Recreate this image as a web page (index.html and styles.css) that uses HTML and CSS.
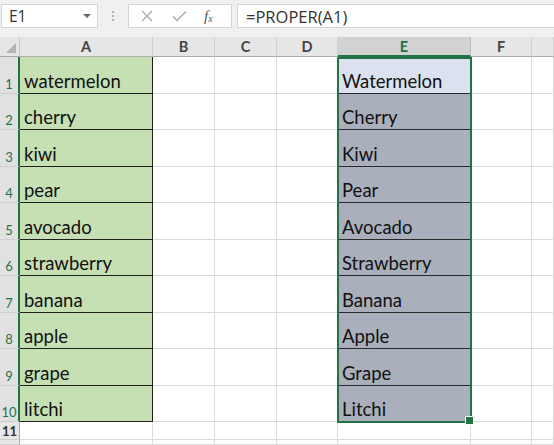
FILE: index.html
```html
<!DOCTYPE html>
<html lang="en">
<head>
    <meta charset="UTF-8">
    <meta name="viewport" content="width=device-width, initial-scale=1.0">
    <title>PROPER</title>
    <link rel="stylesheet" href="styles.css">
</head>
<body>
    <!-- Formula bar -->
    <div class="formula-bar">
        <div class="name-box">
            <span>E1</span>
            <span class="caret"></span>
        </div>
        <div class="grip"><i></i><i></i><i></i></div>
        <div class="fx-box">
            <svg class="fx-icon" width="12" height="12" viewBox="0 0 12 12">
                <path d="M1 1 L11 11 M11 1 L1 11" stroke="#a6a6a6" stroke-width="1.3" fill="none"/>
            </svg>
            <svg class="fx-icon" width="15" height="12" viewBox="0 0 15 12">
                <path d="M1 6.5 L5 10.5 L14 1.5" stroke="#a6a6a6" stroke-width="1.3" fill="none"/>
            </svg>
            <span class="fx-label">f<sub>x</sub></span>
        </div>
        <div class="formula-input">=PROPER(A1)</div>
    </div>

    <!-- Sheet -->
    <div class="sheet" id="sheet"></div>

    <script>
        const fruits = ["watermelon", "cherry", "kiwi", "pear", "avocado",
                        "strawberry", "banana", "apple", "grape", "litchi"];
        const columns = ["A", "B", "C", "D", "E", "F", ""];
        const sheet = document.getElementById('sheet');

        function cell(cls, text) {
            const el = document.createElement('div');
            el.className = cls;
            if (text) el.textContent = text;
            sheet.appendChild(el);
            return el;
        }

        // header row
        cell('corner').innerHTML = '<span class="corner-tri"></span>';
        columns.forEach(col => {
            cell('col-head' + (col === 'E' ? ' active' : ''), col);
        });

        // rows 1-10
        fruits.forEach((fruit, i) => {
            cell('row-head selected', String(i + 1));
            cell('cell green', fruit);
            cell('cell');
            cell('cell');
            cell('cell');
            const proper = fruit.charAt(0).toUpperCase() + fruit.slice(1);
            cell('cell slate' + (i === 0 ? ' first' : ''), proper);
            cell('cell');
            cell('cell');
        });

        // row 11 and the partial row under it
        cell('row-head plain', '11');
        for (let c = 0; c < 7; c++) cell('cell');
        cell('row-head plain');
        for (let c = 0; c < 7; c++) cell('cell');

        // selection frame E1:E10
        const frame = document.createElement('div');
        frame.className = 'selection';
        sheet.appendChild(frame);
    </script>
</body>
</html>
```

FILE: styles.css
```css
* {
    margin: 0;
    padding: 0;
    box-sizing: border-box;
}

body {
    width: 554px;
    height: 445px;
    overflow: hidden;
    background: #fff;
    font-family: 'Lato', 'Open Sans', sans-serif;
    color: #222;
}

/* Formula bar */
.formula-bar {
    height: 37px;
    background: #f0f0f0;
    display: flex;
    align-items: flex-start;
    padding-top: 4px;
    padding-left: 1px;
}

.name-box {
    width: 97px;
    height: 24px;
    background: #fff;
    border: 1px solid #d4d4d4;
    display: flex;
    align-items: center;
    justify-content: space-between;
    padding: 0 6px 0 7px;
    font-family: 'Open Sans', sans-serif;
    font-size: 15.5px;
    color: #333;
}

.caret {
    width: 0;
    height: 0;
    border-left: 4px solid transparent;
    border-right: 4px solid transparent;
    border-top: 4px solid #6a6a6a;
}

.grip {
    width: 30px;
    height: 24px;
    display: flex;
    flex-direction: column;
    align-items: center;
    justify-content: center;
    gap: 2px;
}

.grip i {
    width: 2px;
    height: 2px;
    background: #b0b0b0;
}

.fx-box {
    width: 104px;
    height: 24px;
    background: #fff;
    border: 1px solid #d4d4d4;
    display: flex;
    align-items: center;
    padding-left: 12px;
    gap: 19px;
}

.fx-label {
    font-family: 'Liberation Serif', serif;
    font-style: italic;
    font-size: 15px;
    color: #555;
    margin-left: -2px;
}

.fx-label sub {
    font-size: 10px;
    vertical-align: -1px;
}

.formula-input {
    flex: 1;
    height: 24px;
    margin-left: 5px;
    background: #fff;
    border: 1px solid #d4d4d4;
    border-right: none;
    padding-left: 8px;
    display: flex;
    align-items: center;
    font-family: 'Open Sans', sans-serif;
    font-size: 16.5px;
    color: #333;
}

/* Sheet grid */
.sheet {
    position: relative;
    display: grid;
    grid-template-columns: 20px 133px 62px 62px 61px 133px 61px 1fr;
    grid-template-rows: 20px repeat(10, 36.5px) 18px 1fr;
    height: 408px;
}

.corner {
    background: #e6e6e6;
    border-right: 1px solid #c8c8c8;
    border-bottom: 1px solid #ababab;
    position: relative;
}

.corner-tri {
    position: absolute;
    right: 3px;
    bottom: 3px;
    width: 0;
    height: 0;
    border-left: 10px solid transparent;
    border-bottom: 10px solid #b4b4b4;
}

.col-head {
    background: #e6e6e6;
    border-right: 1px solid #cfcfcf;
    border-bottom: 1px solid #ababab;
    display: flex;
    align-items: center;
    justify-content: center;
    font-size: 14.5px;
    font-weight: 700;
    color: #444;
}

.col-head.active {
    background: #d2d2d2;
    color: #217346;
    border-bottom: 2px solid #217346;
    border-right-color: #bdbdbd;
}

.row-head {
    background: #e6e6e6;
    border-bottom: 1px solid #cfcfcf;
    border-right: 1px solid #ababab;
    display: flex;
    align-items: flex-end;
    justify-content: center;
    padding-bottom: 1px;
    font-size: 13px;
    color: #444;
}

.row-head.selected {
    background: #e1e1e1;
    color: #217346;
    border-right: 2px solid #217346;
}

.row-head.plain {
    font-weight: 700;
    color: #333;
    align-items: center;
    padding-bottom: 0;
}

.cell {
    border-right: 1px solid #dadada;
    border-bottom: 1px solid #dadada;
    display: flex;
    align-items: flex-end;
    padding: 0 0 1px 4px;
    font-size: 18.5px;
    line-height: 22px;
    color: #111;
    white-space: nowrap;
}

.cell.green {
    background: #c6e0b4;
    border-right-color: #1f1f1f;
    border-bottom-color: #1f1f1f;
}

.cell.slate {
    background: #a9b0bc;
    border-bottom-color: #2a2a2a;
}

.cell.slate.first {
    background: #dbe1ee;
}

/* Selection frame sits over the E cells */
.selection {
    position: absolute;
    grid-column: 6 / 7;
    grid-row: 2 / 12;
    top: 0;
    left: -1px;
    right: -1px;
    bottom: -1px;
    border: 2px solid #217346;
    pointer-events: none;
}

.selection::after {
    content: "";
    position: absolute;
    right: -4px;
    bottom: -4px;
    width: 7px;
    height: 7px;
    background: #217346;
    border: 1px solid #fff;
}
```
